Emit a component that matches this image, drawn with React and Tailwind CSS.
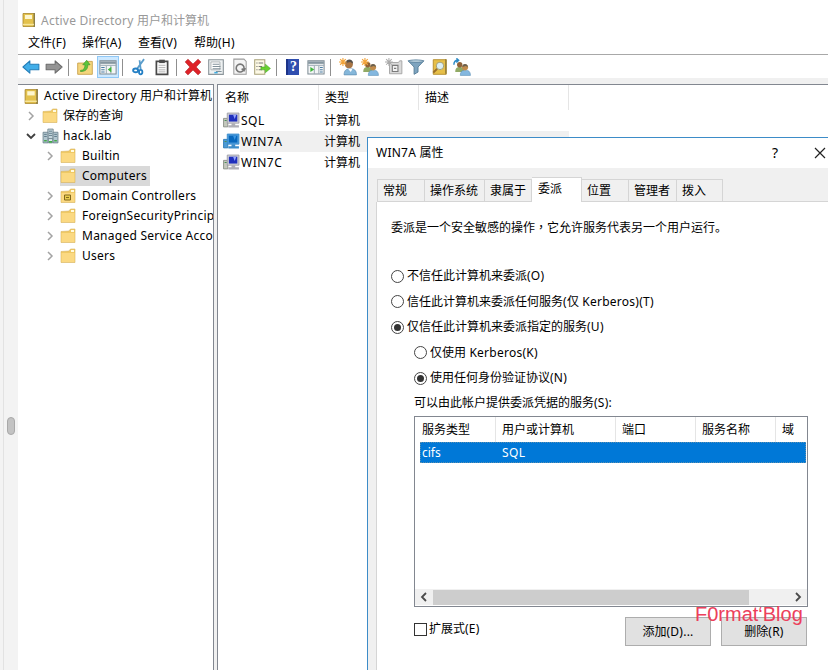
import React from "react";

const Svg = ({ size = 18, children }) => (
  <svg width={size} height={size} viewBox="0 0 16 16" className="block shrink-0">
    {children}
  </svg>
);

// Latin runs are set slightly looser than the Chinese text around them.
const T = ({ children }) =>
  children.split(/([\x20-\x7e]+)/).map((part, i) =>
    i % 2 ? <span key={i} className="whitespace-pre tracking-[0.25px]">{part}</span> : part
  );

const Book = ({ size = 16 }) => (
  <Svg size={size}>
    <path d="M2 1.5h11.5v13H2z" fill="#e3c14c" stroke="#a8862a" strokeWidth=".8" />
    <path d="M4 3h7v4H4z" fill="#fdf6cf" />
    <path d="M13.2 1v14" stroke="#8a7c45" strokeWidth="1.4" />
    <path d="M2 12.5h11" stroke="#f6e59b" strokeWidth="1.4" />
  </Svg>
);

const Folder = ({ ou }) => (
  <Svg size={16}>
    <path d="M1 3.5 9 3l1.5-2h4.5v13.5H1z" fill="#efc965" stroke="#d9b563" strokeWidth=".6" />
    <path d="M11 2h3v2h-3z" fill="#fffbe0" />
    <path d="M1.5 5h13v9h-13z" fill="#fbd982" />
    {ou && <path d="M4.500 7h6v5h-6zM6 9.500h3" fill="#e8cc4f" stroke="#83691c" strokeWidth="1" />}
  </Svg>
);

const Domain = () => (
  <Svg size={17}>
    <path d="M5.5 1h5v9h-5z" fill="#c5d5dc" stroke="#72858e" strokeWidth=".8" />
    <path d="M1 4h4.600v10H1zM10.400 4H15v10h-4.600z" fill="#b2c6cf" stroke="#6c828d" strokeWidth=".8" />
    <path d="M2 6h2.500M2 8h2.500M11.500 6H14M11.500 8H14M6.500 3h3M6.500 5h3M6.500 7h3" stroke="#557382" strokeWidth=".8" />
    <path d="M6 10h4v4H6z" fill="#dce8ec" stroke="#6c828d" strokeWidth=".8" />
    <path d="M2 12h2.500M11.500 12H14M6.500 13h3" stroke="#43aa48" strokeWidth="1.600" fill="none" />
  </Svg>
);

const Computer = ({ active }) => (
  <Svg size={17}>
    <path d="M.5 6h4v8h-4z" fill={active ? "#4d9bd5" : "#c4c8bd"} stroke={active ? "#2b78b5" : "#858a82"} strokeWidth=".8" />
    <path d="M1.500 8h2" stroke="#4c8d57" />
    <path d="M4 1h11v9.500H4z" fill={active ? "#4c9cdb" : "#d3d3d8"} stroke={active ? "#3589cb" : "#9898a3"} strokeWidth=".8" />
    <path d="M5.500 2.500h8v6.500h-8z" fill={active ? "#0868bd" : "#2030bd"} />
    <path d="M9.500 2.500h3l-1.500 4z" fill={active ? "#3d98e2" : "#95a6ff"} />
    <path d="M8 10.500h3.500v2H8zM5 12.500h10v2H5z" fill={active ? "#3d8dca" : "#afafb6"} />
  </Svg>
);

const Left = () => (
  <Svg><path d="M.8 8 7 2.500v3H15v5H7v3z" fill="#41aee9" stroke="#247db7" strokeWidth=".9" strokeLinejoin="round" /></Svg>
);
const Right = () => (
  <Svg><path d="M15.200 8 9 2.500v3H1v5h8v3z" fill="#949494" stroke="#6b6b6b" strokeWidth=".9" strokeLinejoin="round" /></Svg>
);
const UpFolder = () => (
  <Svg>
    <path d="M1.500 4.500h7l1-1.500h5v11.500h-13z" fill="#f4d57c" stroke="#c9a14c" strokeWidth=".8" />
    <path d="M4 11c3 0 4-2 4-5H6l3.500-4 3 4h-2c0 4-2 6-6.500 6z" fill="#5cc53b" stroke="#3b972a" strokeWidth=".6" />
  </Svg>
);
const Panel = ({ play }) => (
  <Svg>
    <path d="M.8 2.500h14.400v11.700H.8z" fill="#f3f5f6" stroke="#7d8b94" strokeWidth=".9" />
    <path d="M1 3h14v2.200H1z" fill="#8696a0" />
    <path d="M1 6.500h14M6.500 7v7M10.500 7v7" stroke="#92a1ab" strokeWidth=".8" />
    {play ? (
      <><path d="M3 8l3.500 2.300L3 12.500z" fill="#3fb43b" /><path d="M11.500 8.500H14M11.500 10.500H14M11.500 12.500H14" stroke="#4c7ea4" strokeWidth=".9" /></>
    ) : (
      <><path d="M11 7.800v5L7.800 10.300z" fill="#3fb43b" /><path d="M2 8.500h3M2 10.500h3M2 12.500h3" stroke="#4c7ea4" strokeWidth=".9" /></>
    )}
  </Svg>
);
const Scissors = () => (
  <Svg>
    <path d="M12.500 1 6 10M8.500 2l1 8" stroke="#5a9dcb" strokeWidth="1.600" />
    <ellipse cx="5" cy="11" rx="2.200" ry="1.600" fill="none" stroke="#247fc4" strokeWidth="1.700" />
    <ellipse cx="9.500" cy="12.500" rx="1.500" ry="2" fill="none" stroke="#247fc4" strokeWidth="1.600" />
  </Svg>
);
const Clipboard = () => (
  <Svg>
    <path d="M3 3h10v11.500H3z" fill="#fafafa" stroke="#494949" strokeWidth="1.500" />
    <path d="M5.500 1.500h5v3h-5z" fill="#4a4a4a" />
    <path d="M5 6.500h6M5 8.500h6M5 10.500h6M5 12.300h6" stroke="#a4a4a4" strokeWidth=".7" />
  </Svg>
);
const Delete = () => (
  <Svg><path d="M1 3.500 3.500 1 8 5.300 12.500 1 15 3.500 10.800 8l4.200 4.500-2.500 2.500L8 10.700 3.500 15 1 12.500 5.200 8z" fill="#de2228" stroke="#ad2428" strokeWidth=".5" /></Svg>
);
const Properties = () => (
  <Svg>
    <path d="M1.500 1.500h13v13h-13z" fill="#eef1f2" stroke="#8d969b" />
    <path d="M3.500 3.500h8v7h-8z" fill="#fff" stroke="#a0a6aa" strokeWidth=".7" />
    <path d="M5 5.500h6M5 7.500h7M5 9.500h7M8 12h5" stroke="#82919a" strokeWidth=".9" />
    <path d="M6.500 13h3" stroke="#40acdf" strokeWidth="1.400" />
  </Svg>
);
const Refresh = () => (
  <Svg>
    <path d="M2.500 1h9l2 2v11.500h-11z" fill="#f4f4f4" stroke="#9b9b9b" strokeWidth=".9" />
    <path d="M10.500 11.500A3.500 3.500 0 1 1 11.500 8v2M9.500 9.500l2 1.800 1.300-2.300" fill="none" stroke="#777" strokeWidth="1.400" />
  </Svg>
);
const Export = () => (
  <Svg>
    <path d="M1.500 1.500h9v13h-9z" fill="#fdf9e5" stroke="#a8a178" strokeWidth=".9" />
    <path d="M3 4.500h1M3 7.500h1M3 10.500h1M5 4.500h4M5 7.500h3M5 10.500h3" stroke="#777" strokeWidth=".9" />
    <path d="M7 8h4V5.500L15.500 9.300 11 13v-2.500H7z" fill="#69d12e" stroke="#45a827" strokeWidth=".5" />
  </Svg>
);
const Help = () => (
  <span className="block shrink-0 w-[13px] h-4 bg-[#2f4eaf] border-l-2 border-[#1c3388] text-center text-[14px] leading-4 font-bold text-white font-['Liberation_Serif',serif]">?</span>
);
const Star = () => <path d="M3.500 0v7M0 3.500h7M1 1l5 5M6 1 1 6" stroke="#f2a43b" strokeWidth="1" />;
const User = () => (
  <Svg>
    <path d="M4.500 15c0-4 2-5.500 5.500-5.500s5.500 1.500 5.500 5.500z" fill="#85b7da" stroke="#5c8bb0" strokeWidth=".6" />
    <circle cx="8.800" cy="5.500" r="3.500" fill="#a87545" /><path d="M5.800 4.500C6 .5 12.500 0 12.500 5L10 3.500z" fill="#55504a" />
    <path d="M8 9.500l2.500 3 1.500-3z" fill="#fff" /><Star />
  </Svg>
);
const Group = ({ refresh }) => (
  <Svg>
    <path d="M2 12.500c0-3.500 1.500-4.500 4-4.500s4 1 4 4.500z" fill="#91aa65" />
    <circle cx="6" cy="6" r="2.400" fill="#8f6238" />
    <path d="M6.500 15.500c0-3.700 2-4.700 4.500-4.700s4.500 1 4.500 4.700z" fill="#83b7df" stroke="#5a8eb6" strokeWidth=".5" />
    <circle cx="10.700" cy="8.300" r="2.700" fill="#c28b4b" /><path d="M8.300 8c0-3.500 4.700-3.500 5 0l-2-1z" fill="#69604f" />
    {refresh ? <path d="M.8 6C.8 3 2 2 4.500 2M3 .3 5 2 3 4" fill="none" stroke="#2b8ac6" strokeWidth="1.300" /> : <Star />}
  </Svg>
);
const NewOu = () => (
  <Svg>
    <path d="M4 4h8l1-1.500h2V14H4z" fill="#dadada" stroke="#a3a3a3" strokeWidth=".8" />
    <path d="M6.500 6.500h5v5.500h-5zM8 9.200h2" fill="#f2f2f2" stroke="#7b7b7b" strokeWidth="1" />
    <path d="M3.500 0v7M0 3.500h7M1 1l5 5M6 1 1 6" stroke="#aaa" strokeWidth=".9" />
  </Svg>
);
const Funnel = () => (
  <Svg>
    <path d="M1 2.500 6.300 8v6.500l3.500-2V8L15 2.500z" fill="#7ea4bf" stroke="#547b96" strokeWidth=".8" />
    <ellipse cx="8" cy="2.800" rx="6.500" ry="1.200" fill="#b3cbd9" stroke="#547b96" strokeWidth=".6" />
  </Svg>
);
const Find = () => (
  <Svg>
    <path d="M2 1.500h11.500v13H2z" fill="#e6bf48" stroke="#b28c2b" strokeWidth=".8" />
    <path d="M13.200 1v13" stroke="#8f7935" strokeWidth="1.200" />
    <path d="M5.500 9.500 2 13" stroke="#996d28" strokeWidth="1.800" />
    <circle cx="8" cy="7" r="3.300" fill="#dbeff3" stroke="#9e9b73" strokeWidth=".8" />
  </Svg>
);

const Chevron = ({ open }) => (
  <svg width="10" height="10" viewBox="0 0 10 10" className="block shrink-0">
    <path d={open ? "M1 3 5 7 9 3" : "M3 1l4 4-4 4"} fill="none" stroke={open ? "#3f3f3f" : "#a3a3a3"} strokeWidth={open ? 1.8 : 1.5} />
  </svg>
);

const Sep = ({ className }) => <div className={`h-[17px] w-px shrink-0 bg-[#8f8f8f] ${className}`} />;

const tools = [
  [Left, "ml-[4px]"], [Right, "ml-[5px]"], ["sep", "ml-[5px]"], [UpFolder, "ml-[7px]"],
  ["active", "ml-[3px]"], ["sep", "ml-[3px]"], [Scissors, "ml-[7px]"], [Clipboard, "ml-[5px]"],
  ["sep", "ml-[5px]"], [Delete, "ml-[7px]"], [Properties, "ml-[5px]"], [Refresh, "ml-[6px]"], [Export, "ml-[4px]"],
  ["sep", "ml-[5px]"], [Help, "ml-[9px]"], ["play", "ml-[8px]"], ["sep", "ml-[5px]"],
  [User, "ml-[8px]"], [Group, "ml-[4px]"], [NewOu, "ml-[6px]"], [Funnel, "ml-[4px]"], [Find, "ml-[6px]"], ["members", "ml-[4px]"],
];

const Toolbar = () => (
  <div className="flex h-[24px] items-center border-t border-[#a8a8a8] bg-white pt-px">
    {tools.map(([Icon, gap], i) => {
      if (Icon === "sep") return <Sep key={i} className={gap} />;
      if (Icon === "active")
        return <div key={i} className={`flex h-[22px] w-[22px] shrink-0 items-center justify-center border border-[#90c8f6] bg-[#cce8ff] ${gap}`}><Panel /></div>;
      if (Icon === "play") return <div key={i} className={gap}><Panel play /></div>;
      if (Icon === "members") return <div key={i} className={gap}><Group refresh /></div>;
      return <div key={i} className={gap}><Icon /></div>;
    })}
  </div>
);

const tree = [
  "Builtin",
  "Computers",
  "Domain Controllers",
  "ForeignSecurityPrincipals",
  "Managed Service Accounts",
  "Users",
];

const Tree = () => (
  <div className="flex w-[196px] shrink-0 flex-col overflow-hidden border-r border-t border-[#828790] bg-white pt-px whitespace-nowrap">
    <div className="flex h-5 items-center pl-[5px]"><Book size={17} /><span className="ml-[4px]"><T>Active Directory 用户和计算机</T></span></div>
    <div className="flex h-5 items-center pl-2"><Chevron /><div className="ml-[6px]"><Folder /></div><span className="ml-[5px]">保存的查询</span></div>
    <div className="flex h-5 items-center pl-2"><Chevron open /><div className="ml-[6px]"><Domain /></div><span className="ml-[4px]"><T>hack.lab</T></span></div>
    {tree.map((name) => (
      <div key={name} className="flex h-5 items-center pl-[27px]">
        <div className="w-[15px] shrink-0">{name !== "Computers" && <Chevron />}</div>
        <div className={`flex h-5 shrink-0 items-center ${name === "Computers" ? "bg-[#d9d9d9] pr-[3px]" : ""}`}>
          <Folder ou={name === "Domain Controllers"} />
          <span className="ml-[6px] w-max max-w-[131px] overflow-hidden"><T>{name}</T></span>
        </div>
      </div>
    ))}
  </div>
);

const ObjectList = () => (
  <div className="min-w-0 flex-1 border-l border-t border-[#828790] bg-white">
    <div className="flex h-[25px]">
      <div className="flex w-[101px] items-center border-r border-[#e5e5e5] pl-[7px]">名称</div>
      <div className="flex w-[100px] items-center border-r border-[#e5e5e5] pl-[6px]">类型</div>
      <div className="flex w-[150px] items-center border-r border-[#e5e5e5] pl-[6px]">描述</div>
    </div>
    {["SQL", "WIN7A", "WIN7C"].map((n) => (
      <div key={n} className="flex h-[21px] items-center pl-[5px]">
        <Computer active={n === "WIN7A"} />
        <div className={`flex h-[21px] w-[329px] items-center ${n === "WIN7A" ? "bg-[#f0f0f0]" : ""}`}>
          <span className="w-[84px] pl-px tracking-[0.5px]">{n}</span><span>计算机</span>
        </div>
      </div>
    ))}
  </div>
);

const Radio = ({ checked, className, children }) => (
  <div className={`flex items-center ${className}`}>
    <span className="flex h-[13px] w-[13px] shrink-0 items-center justify-center rounded-full border border-[#444] bg-white">
      {checked && <span className="h-[7px] w-[7px] rounded-full bg-[#333]" />}
    </span>
    <span className="ml-[3px]"><T>{children}</T></span>
  </div>
);

const tabs = [
  ["常规", "w-[48px] pl-[5px]"],
  ["操作系统", "w-[60px] pl-[5px]"],
  ["隶属于", "w-[47px] pl-[5px]"],
  ["委派", "w-[50px] pl-[6px]"],
  ["位置", "w-[47px] pl-[5px]"],
  ["管理者", "w-[48px] pl-[5px]"],
  ["拨入", "w-[46px] pl-[5px]"],
];

const Dialog = () => (
  <div className="absolute left-[367px] top-[137px] flex h-[533px] w-[461px] flex-col overflow-hidden border-l border-t border-[#3d8cc8] bg-[#f0f0f0] whitespace-nowrap">
    <div className="flex h-[30px] shrink-0 items-center bg-white pl-2">
      <span className="flex-1"><T>WIN7A 属性</T></span>
      <span className="mr-[36px] text-[14px]">?</span>
      <svg width="12" height="12" viewBox="0 0 12 12" className="mr-[2px]"><path d="M1 1l10 10M11 1 1 11" stroke="#222" strokeWidth="1.2" /></svg>
    </div>
    <div className="flex h-[34px] shrink-0 items-end pl-[9px]">
      {tabs.map(([t, c]) => (
        <div key={t} className={`flex shrink-0 items-center border-r border-t border-[#d5d5d5] ${c} ${t === "委派" ? "h-[25px] bg-white pb-[2px]" : "h-[23px] border-b"} ${t === "常规" ? "border-l" : ""}`}>{t}</div>
      ))}
      <div className="flex-1 border-b border-[#d5d5d5]" />
    </div>
    <div className="ml-2 flex flex-1 flex-col border-l border-[#d5d5d5] bg-white">
      <div className="mt-[13px] ml-[14px] h-6 leading-6">委派是一个安全敏感的操作<span className="font-['Noto_Sans_CJK_TC',sans-serif]">，</span>它允许服务代表另一个用户运行。</div>
      <Radio className="mt-[24px] ml-[14px] h-[26px]">不信任此计算机来委派(O)</Radio>
      <Radio className="ml-[14px] h-[25px]">信任此计算机来委派任何服务(仅 Kerberos)(T)</Radio>
      <Radio checked className="ml-[14px] h-[26px]">仅信任此计算机来委派指定的服务(U)</Radio>
      <Radio className="ml-[37px] h-[25px]">仅使用 Kerberos(K)</Radio>
      <Radio checked className="ml-[37px] h-[26px]">使用任何身份验证协议(N)</Radio>
      <div className="ml-[37px] h-[25px] leading-6"><T>可以由此帐户提供委派凭据的服务(S):</T></div>
      <div className="ml-[37px] flex h-[191px] w-[394px] flex-col border border-[#828790]">
        <div className="flex h-[25px] shrink-0">
          <div className="flex w-[81px] items-center border-r border-[#e5e5e5] pl-[7px]">服务类型</div>
          <div className="flex w-[120px] items-center border-r border-[#e5e5e5] pl-[6px]">用户或计算机</div>
          <div className="flex w-[80px] items-center border-r border-[#e5e5e5] pl-[6px]">端口</div>
          <div className="flex w-[80px] items-center border-r border-[#e5e5e5] pl-[6px]">服务名称</div>
          <div className="flex items-center pl-[6px]">域</div>
        </div>
        <div className="ml-[5px] mr-px flex h-[21px] shrink-0 items-center border border-dotted border-[#5c8fae] bg-[#0078d7] text-white">
          <span className="w-[81px] pl-px">cifs</span><span className="tracking-[0.4px]">SQL</span>
        </div>
        <div className="flex-1" />
        <div className="mb-px flex h-[16px] shrink-0 items-center bg-[#f0f0f0]">
          <svg width="18" height="10" viewBox="0 0 18 10"><path d="M11 1 7 5l4 4" fill="none" stroke="#4a4a4a" strokeWidth="1.8" /></svg>
          <div className="h-[15px] w-[316px] bg-[#cdcdcd]" />
          <svg width="18" height="10" viewBox="0 0 18 10" className="ml-auto"><path d="M7 1l4 4-4 4" fill="none" stroke="#4a4a4a" strokeWidth="1.8" /></svg>
        </div>
      </div>
      <div className="ml-[37px] flex w-[393px] items-start">
        <div className="mt-[13px] flex h-[18px] items-center">
          <span className="h-[13px] w-[13px] border border-[#333] bg-white" />
          <span className="ml-[2px]"><T>扩展式(E)</T></span>
        </div>
        <div className="mt-[10px] ml-auto flex h-[29px] w-[86px] items-center justify-center border border-[#adadad] bg-[#e1e1e1]"><T>添加(D)...</T></div>
        <div className="mt-[10px] ml-[10px] flex h-[29px] w-[86px] items-center justify-center border border-[#adadad] bg-[#e1e1e1]"><T>删除(R)</T></div>
      </div>
    </div>
  </div>
);

export default function App() {
  return (
    <div className="relative flex h-[670px] w-[828px] overflow-hidden bg-white text-[12px] leading-4 text-black font-['Noto_Sans','Noto_Sans_CJK_SC',sans-serif]">
      <div className="flex w-[18px] shrink-0 bg-[#f3f3f3]">
        <div className="w-1 border-r border-[#e2e2e2]" />
        <div className="mt-[417px] ml-[3px] h-[18px] w-2 rounded-full border border-[#a9a9a9] bg-[#c3c3c3]" />
      </div>
      <div className="flex min-w-0 flex-1 flex-col bg-white">
        <div className="flex h-[31px] items-end pb-[3px] pl-[3px] text-[#999]"><Book size={16} /><span className="relative top-px ml-[4px]"><T>Active Directory 用户和计算机</T></span></div>
        <div className="flex h-[23px] items-center whitespace-nowrap pt-px pl-[10px]">
          <span className="w-[54px]"><T>文件(F)</T></span><span className="w-[56px]"><T>操作(A)</T></span><span className="w-[56px]"><T>查看(V)</T></span><span><T>帮助(H)</T></span>
        </div>
        <Toolbar />
        <div className="flex flex-1 gap-[3px] bg-[#f0f0f0] pt-[6px]"><Tree /><ObjectList /></div>
      </div>
      <Dialog />
      <div className="absolute left-[695px] top-[603px] text-[20px] leading-[23px] whitespace-nowrap text-[#ec405b] font-['Liberation_Sans',sans-serif]">F0rmat‘Blog</div>
    </div>
  );
}
